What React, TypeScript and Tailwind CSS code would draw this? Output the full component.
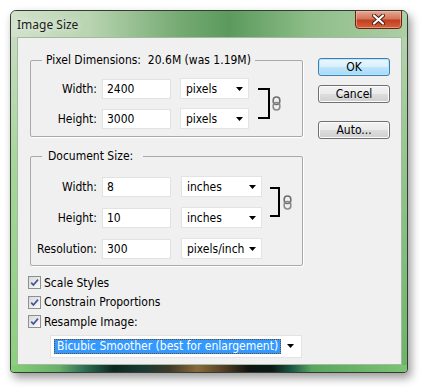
import React from "react";

const Arrow = () => (
  <svg width="7" height="4" viewBox="0 0 7 4">
    <path d="M0 0h7L3.5 4z" fill="#000" />
  </svg>
);

const Chain = () => (
  <svg width="9" height="15" viewBox="0 0 9 15">
    <rect x="1.2" y="1" width="6.6" height="7.5" rx="3.2" fill="none" stroke="#6e6e6e" strokeWidth="1.6" />
    <rect x="1.2" y="6.5" width="6.6" height="7.5" rx="3.2" fill="none" stroke="#8a8a8a" strokeWidth="1.6" />
  </svg>
);

const Select = ({ value, w }: { value: string; w: string }) => (
  <div className={`${w} h-[21px] bg-white border border-[#e3e3e3] flex items-center justify-between pl-[5px] pr-[5px]`}>
    <span>{value}</span>
    <Arrow />
  </div>
);

const Row = ({ label, value, unit, wide }: { label: string; value: string; unit: string; wide?: boolean }) => (
  <div className="flex items-center h-[21px]">
    <span className="w-[66px] text-right">{label}</span>
    <div className="ml-[5px] w-[69px] h-[20px] bg-white border border-[#e2e2e2] pl-[4px] flex items-center">
      {value}
    </div>
    {wide ? (
      <div className="ml-[10px]">
        <Select value={unit} w="w-[81px]" />
      </div>
    ) : (
      <div className="ml-[9px]">
        <Select value={unit} w="w-[69px]" />
      </div>
    )}
  </div>
);

const Check = ({ label }: { label: string }) => (
  <div className="flex items-center h-[19.5px]">
    <div className="w-[13px] h-[13px] border border-[#8e8f8f] bg-[linear-gradient(135deg,#d8d8d8,#fbfbfb)] flex items-center justify-center">
      <svg width="9" height="9" viewBox="0 0 9 9">
        <path d="M1.2 4.6l2.2 2.4L8 1.6" fill="none" stroke="#40589a" strokeWidth="1.7" />
      </svg>
    </div>
    <span className="ml-[3px]">{label}</span>
  </div>
);

const Button = ({ label, primary }: { label: string; primary?: boolean }) => (
  <div
    className={
      primary
        ? "w-[72px] h-[18px] rounded-[3px] border border-[#3c7fb1] bg-[linear-gradient(to_bottom,#eaf6fd_0%,#d9f0fc_50%,#bee6fd_51%,#a7d9f5_100%)] shadow-[inset_0_0_0_1px_#b9e4fb] flex items-center justify-center"
        : "w-[72px] h-[18px] rounded-[3px] border border-[#707070] bg-[linear-gradient(to_bottom,#f2f2f2_0%,#ebebeb_50%,#dddddd_51%,#cfcfcf_100%)] shadow-[inset_0_0_0_1px_#fcfcfc] flex items-center justify-center"
    }
  >
    {label}
  </div>
);

const App = () => {
  return (
    <div className="w-[427px] h-[392px] bg-white pl-[10px] pt-[10px]">
      <div className="w-[398px] h-[363px] rounded-t-[6px] rounded-b-[4px] border border-[#343a34] bg-[#a9cfa0] shadow-[3px_5px_10px_rgba(0,0,0,0.4)] flex flex-col overflow-hidden">
        {/* title bar */}
        <div className="h-[26px] flex items-start bg-[linear-gradient(to_right,#d2e2cc_0%,#b8d4b0_20%,#77ab74_42%,#5b9a5c_55%,#8fbe8a_76%,#adcea6_100%)]">
          <span className="self-center ml-[6px] mt-[2px] text-[12px] text-[#1b1b1b] font-['Noto_Sans',sans-serif] [text-shadow:0_0_6px_rgba(255,255,255,0.9)]">
            Image Size
          </span>
          <div className="ml-auto mr-[5px] -mt-px w-[47px] h-[19px] rounded-b-[4px] border border-[#6e1f12] bg-[linear-gradient(to_bottom,#e8a894_0%,#d3765c_45%,#c0401f_55%,#d4623e_100%)] shadow-[inset_0_0_0_1px_rgba(255,200,180,0.5)] flex items-center justify-center">
            <svg width="13" height="11" viewBox="0 0 13 11">
              <path d="M2 1.5l9 8M11 1.5l-9 8" stroke="#4a1a10" strokeWidth="4" strokeLinecap="round" />
              <path d="M2 1.5l9 8M11 1.5l-9 8" stroke="#ffffff" strokeWidth="2.2" strokeLinecap="round" />
            </svg>
          </div>
        </div>

        <div className="flex">
          {/* left frame */}
          <div className="w-[6px] bg-[linear-gradient(to_bottom,#c6dcc0,#a6d69a_40%,#8cd07e)]" />

          {/* client */}
          <div className="w-[385px] h-[328px] border border-[#a3b9a0] bg-[#f0f0f0] flex pl-[10px] text-[12px] text-black font-['DejaVu_Sans_Condensed','DejaVu_Sans',sans-serif]">
            <div className="w-[275px] flex flex-col">
              <fieldset className="mt-[14px] ml-[2px] w-[273px] border border-[#a9a9a9] rounded-[2px] pt-[10px] pb-[7px] shadow-[1px_1px_0_#ffffff]">
                <legend className="ml-[11px] px-[4px] leading-[16px]">
                  Pixel Dimensions:&nbsp; 20.6M (was 1.19M)
                </legend>
                <div className="flex">
                  <div className="flex flex-col gap-[9px]">
                    <Row label="Width:" value="2400" unit="pixels" />
                    <Row label="Height:" value="3000" unit="pixels" />
                  </div>
                  <div className="flex items-center mt-[10px] h-[31px]">
                    <div className="ml-[9px] w-[12px] h-[31px] border-y-2 border-r-2 border-black" />
                    <div className="ml-[2px]">
                      <Chain />
                    </div>
                  </div>
                </div>
              </fieldset>

              <fieldset className="mt-[11px] ml-[2px] w-[273px] border border-[#a9a9a9] rounded-[2px] pt-[12px] pb-[6px] shadow-[1px_1px_0_#ffffff]">
                <legend className="ml-[11px] pl-[6px] pr-[10px] leading-[16px]">Document Size:</legend>
                <div className="flex">
                  <div className="flex flex-col gap-[10px]">
                    <Row label="Width:" value="8" unit="inches" wide />
                    <Row label="Height:" value="10" unit="inches" wide />
                    <Row label="Resolution:" value="300" unit="pixels/inch" wide />
                  </div>
                  <div className="flex items-center self-start mt-[11px] h-[30px]">
                    <div className="ml-[8px] w-[10px] h-[30px] border-y-2 border-r-2 border-black" />
                    <div className="ml-[3px]">
                      <Chain />
                    </div>
                  </div>
                </div>
              </fieldset>

              <div className="mt-[7px] flex flex-col">
                <Check label="Scale Styles" />
                <Check label="Constrain Proportions" />
                <Check label="Resample Image:" />
              </div>

              <div className="mt-[3px] ml-[22px] w-[252px] h-[23px] bg-white border border-[#e3e3e3] flex items-center pl-[3px] pr-[7px]">
                <div className="h-[15px] bg-[#3399ff] border border-dotted border-[#6b4a22] text-white flex items-center pl-[2px] pr-[2px] leading-[13px] whitespace-nowrap">
                  Bicubic Smoother (best for enlargement)
                </div>
                <div className="ml-auto">
                  <Arrow />
                </div>
              </div>
            </div>

            <div className="ml-[15px] mt-[20px] flex flex-col">
              <Button label="OK" primary />
              <div className="mt-[9px]">
                <Button label="Cancel" />
              </div>
              <div className="mt-[18px]">
                <Button label="Auto..." />
              </div>
            </div>
          </div>

          {/* right frame */}
          <div className="w-[5px] bg-[linear-gradient(to_bottom,#b3d2ab,#8cc286_50%,#6db468)]" />
        </div>

        {/* bottom frame */}
        <div className="flex-1 bg-[linear-gradient(to_right,#86cf78_0%,#6bb06a_12%,#2c6a55_19%,#0c2820_26%,#1a3a33_33%,#3d3a28_40%,#8a6a3a_47%,#5a4428_53%,#111410_60%,#0a1a16_66%,#1d5a48_71%,#5aa65e_76%,#7cc474_100%)]" />
      </div>
    </div>
  );
};

export default App;
